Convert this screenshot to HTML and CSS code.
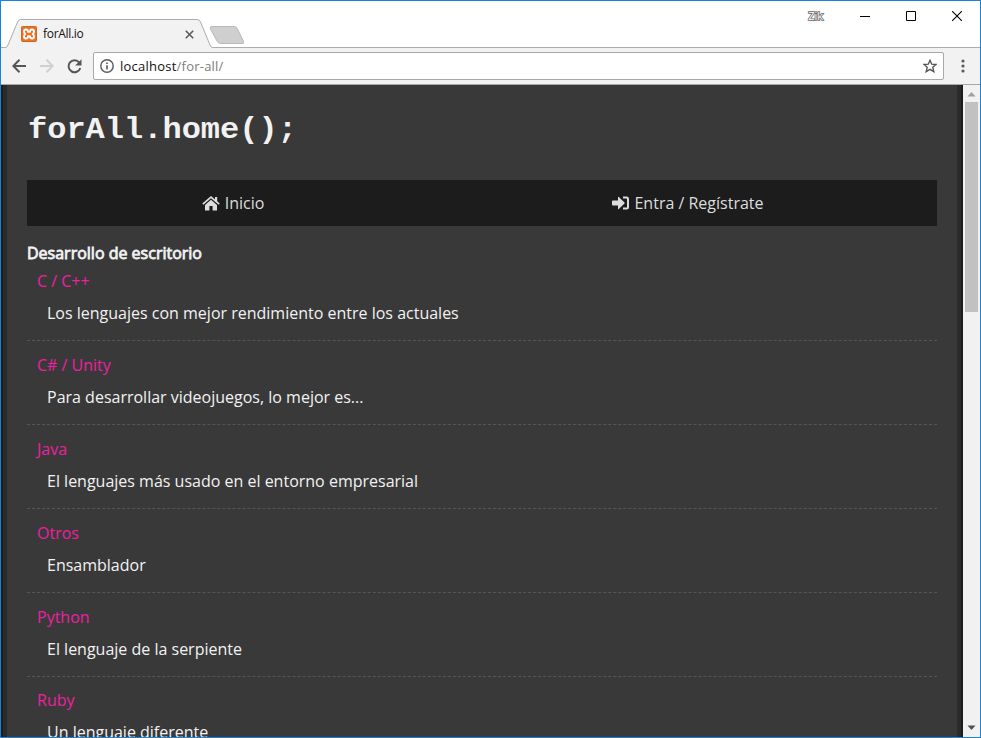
FILE: index.html
```html
<!DOCTYPE html>
<html lang="es">
<head>
<meta charset="utf-8">
<title>forAll.io</title>
<link rel="stylesheet" href="styles.css">
</head>
<body>
<div class="window">
  <header class="tabstrip">
    <svg class="tab-shapes" width="246" height="47" viewBox="0 0 246 47">
      <path d="M0 46.5H4.500Q6 46.500 7 44L16.500 21Q17.500 18.500 19.500 18.500H196Q198.500 18.500 199.500 21L209 44Q210 46.500 212 46.500H246V47H0Z" fill="#f2f2f2"/>
      <path d="M0 46.500H4.500Q6 46.500 7 44L16.500 21Q17.500 18.500 19.500 18.500H196Q198.500 18.500 199.500 21L209 44Q210 46.500 212 46.500H246" fill="none" stroke="#adadad"/>
      <path d="M210.500 25.500H233Q235.500 25.500 236.500 28L242.500 40.500Q243.500 42.500 241 42.500H220Q217 42.500 216 40L209.500 28Q208.500 25.500 210.500 25.500Z" fill="#cfcfcf" stroke="#b8b8b8"/>
    </svg>
    <div class="tab">
      <svg class="favicon" width="16" height="16" viewBox="0 0 16 16">
        <rect x=".5" y=".5" width="15" height="15" rx="1" fill="#f27021" stroke="#c9682e"/>
        <path d="M5 3.500Q3 3.500 3 5.500Q3 7 4.200 8Q3 9 3 10.500Q3 12.500 5 12.500Q7 12.500 7 10.300H9Q9 12.500 11 12.500Q13 12.500 13 10.500Q13 9 11.800 8Q13 7 13 5.500Q13 3.500 11 3.500Q9 3.500 9 5.700H7Q7 3.500 5 3.500Z" fill="none" stroke="#fff" stroke-width="1.900" stroke-linejoin="round"/>
      </svg>
      <span class="tab-title">forAll.io</span>
      <svg class="tab-close" width="9" height="9" viewBox="0 0 9 9"><path d="M.8.8L8.200 8.200M8.200.8L.8 8.200" stroke="#5a5a5a" stroke-width="1.600"/></svg>
    </div>
    <div class="controls">
      <span class="profile">Zik</span>
      <svg width="10" height="10" viewBox="0 0 10 10"><path d="M0 5.500H10" stroke="#000"/></svg>
      <svg width="10" height="10" viewBox="0 0 10 10"><path d="M.5.5H9.500V9.500H.5Z" fill="none" stroke="#000"/></svg>
      <svg width="10" height="10" viewBox="0 0 10 10"><path d="M0 0L10 10M10 0L0 10" stroke="#000" stroke-width="1.100"/></svg>
    </div>
  </header>
  <div class="toolbar">
    <svg class="back" width="14" height="14" viewBox="0 0 14 14"><path d="M14 7H1.500M7.500.7L1.300 7L7.500 13.300" fill="none" stroke="#565656" stroke-width="2"/></svg>
    <svg class="forward" width="14" height="14" viewBox="0 0 14 14"><path d="M0 7H12.500M6.500.7L12.700 7L6.500 13.300" fill="none" stroke="#d0d0d0" stroke-width="2"/></svg>
    <svg class="reload" width="15" height="15" viewBox="0 0 15 15"><path d="M12.200 3.400A6 6 0 1 0 13.300 9" fill="none" stroke="#565656" stroke-width="2"/><path d="M14.500.3V6.600H8.200Z" fill="#565656"/></svg>
    <div class="address">
      <svg width="14" height="14" viewBox="0 0 14 14"><circle cx="7" cy="7" r="6.200" fill="none" stroke="#5a5a5a" stroke-width="1.400"/><path d="M7 6.200V10.500M7 3.500V5" stroke="#5a5a5a" stroke-width="1.600"/></svg>
      <span class="url">localhost<span class="path">/for-all/</span></span>
      <svg width="14" height="14" viewBox="0 0 14 14"><path d="M7 1.300L8.700 5.200L13 5.500L9.800 8.300L10.800 12.700L7 10.400L3.200 12.700L4.200 8.300L1 5.500L5.300 5.200Z" fill="none" stroke="#565656" stroke-width="1.400"/></svg>
    </div>
    <svg class="menu" width="4" height="14" viewBox="0 0 4 14"><g fill="#5a5a5a"><circle cx="2" cy="2" r="1.600"/><circle cx="2" cy="7" r="1.600"/><circle cx="2" cy="12" r="1.600"/></g></svg>
  </div>
  <div class="viewport">
    <main class="page">
      <h1>forAll.home();</h1>
      <nav>
        <a class="nav-item"><svg width="18" height="15" viewBox="0 0 18 15"><path d="M9 3.800L15 8.900V14Q15 14.600 14.400 14.600H10.600V10H7.400V14.600H3.600Q3 14.600 3 14V8.900Z" fill="#ddd"/><path d="M.8 8.100L9 1.200L17.200 8.100" fill="none" stroke="#ddd" stroke-width="1.700"/><path d="M13 1H15.200V6H13Z" fill="#ddd"/></svg>Inicio</a>
        <a class="nav-item"><svg class="login" width="17" height="14" viewBox="0 0 17 14"><path d="M6 1.200Q6 .3 6.800.9L12.500 6.500Q13 7 12.500 7.500L6.800 13.100Q6 13.700 6 12.800V9.500H.8Q0 9.500 0 8.800V5.200Q0 4.500.8 4.500H6Z" fill="#ddd"/><path d="M11 1.500H14.500Q16 1.500 16 3V11Q16 12.500 14.500 12.500H11" fill="none" stroke="#ddd" stroke-width="2"/></svg>Entra / Regístrate</a>
      </nav>
      <h2>Desarrollo de escritorio</h2>
      <section class="topic"><h3>C / C++</h3><p>Los lenguajes con mejor rendimiento entre los actuales</p></section>
      <section class="topic"><h3>C# / Unity</h3><p>Para desarrollar videojuegos, lo mejor es...</p></section>
      <section class="topic"><h3>Java</h3><p>El lenguajes más usado en el entorno empresarial</p></section>
      <section class="topic"><h3>Otros</h3><p>Ensamblador</p></section>
      <section class="topic"><h3>Python</h3><p>El lenguaje de la serpiente</p></section>
      <section class="topic last"><h3>Ruby</h3><p>Un lenguaje diferente</p></section>
    </main>
    <div class="scrollbar">
      <svg width="9" height="5" viewBox="0 0 9 5"><path d="M4.500 0L8.500 4.500H.5Z" fill="#a0a0a0"/></svg>
      <div class="thumb"></div>
      <svg width="9" height="5" viewBox="0 0 9 5"><path d="M.5.500H8.500L4.500 5Z" fill="#505050"/></svg>
    </div>
  </div>
</div>
</body>
</html>
```
FILE: styles.css
```css
* { box-sizing: border-box; }
body { margin: 0; overflow: hidden; font-family: "Open Sans", sans-serif; }
svg { display: block; flex: none; }
.window {
  width: 981px; height: 738px;
  border: 1px solid #1883d7;
  display: flex; flex-direction: column;
  overflow: hidden; background: #fff;
}
.tabstrip {
  position: relative; height: 47px; flex: none;
  display: flex; justify-content: space-between;
  background: linear-gradient(#adadad, #adadad) 0 46px / 100% 1px no-repeat #fff;
}
.tab-shapes { position: absolute; left: 0; top: 0; }
.tab { position: relative; display: flex; align-items: center; width: 193px; padding: 19px 0 0 20px; height: 46px; }
.tab-title { margin-left: 6px; font-size: 12px; letter-spacing: -.3px; color: #111; flex: 1; }
.tab-close { margin-top: 1px; }
.controls { display: flex; align-items: center; height: 29px; padding-right: 18px; gap: 36px; }
.profile {
  font-size: 11px; line-height: 16px; color: #fff; margin-right: 1px; margin-top: 1px;
  -webkit-text-stroke: 1.6px #666; paint-order: stroke fill;
}
.toolbar {
  height: 37px; flex: none; display: flex; align-items: center;
  background: #f2f2f2; border-bottom: 1px solid #a9a9a9;
  padding: 0 15px 0 11px;
}
.forward { margin-left: 14px; }
.reload { margin-left: 13px; }
.address {
  display: flex; align-items: center; width: 851px; height: 28px; flex: none;
  margin-left: 11px; padding: 0 6px;
  border: 1px solid #a9a9a9; border-radius: 2px; background: #fff;
}
.url { flex: 1; margin-left: 6px; font-size: 13px; line-height: 18px; letter-spacing: .23px; color: #111; }
.path { color: #7c7c7c; }
.menu { margin-left: 17px; }
.viewport { flex: 1; min-height: 0; display: flex; background: #1c1c1c; }
.page {
  width: 958px; margin: 0 2px; padding: 0 20px;
  border: solid #2b2b2b; border-width: 0 4px;
  background: #393939; color: #f2f2f2;
  font-size: 16px; line-height: 22px; overflow: hidden;
}
h1 {
  margin: 25px 0 0; padding-left: 1px; height: 70px;
  font: bold 32px/36px "Courier New", "Liberation Mono", monospace;
  transform: translateY(5px) scaleY(.9); transform-origin: 0 0;
}
nav { display: grid; grid-template-columns: 1fr 1fr; height: 46px; background: #1c1c1c; color: #ddd; }
.nav-item { display: flex; align-items: center; justify-content: center; gap: 5px; padding-right: 43px; }
h2 { margin: 16px 0 0; font-size: 16px; line-height: 22px; font-weight: 400; -webkit-text-stroke: .8px #f2f2f2; }
.topic { height: 84px; padding: 13px 0 0 10px; border-bottom: 1px dashed #555; }
h2 + .topic { height: 77px; padding-top: 6px; }
.topic.last { padding-top: 12px; }
h3 { margin: 0; font-size: 16px; line-height: 22px; font-weight: 400; color: #ee1fa2; }
.topic p { margin: 10px 0 0 10px; }
.scrollbar {
  width: 17px; flex: none; background: #f1f1f1;
  display: flex; flex-direction: column; align-items: center; padding: 7px 0;
}
.thumb { width: 13px; height: 210px; margin: 5px 0 auto; background: #c1c1c1; }
```
